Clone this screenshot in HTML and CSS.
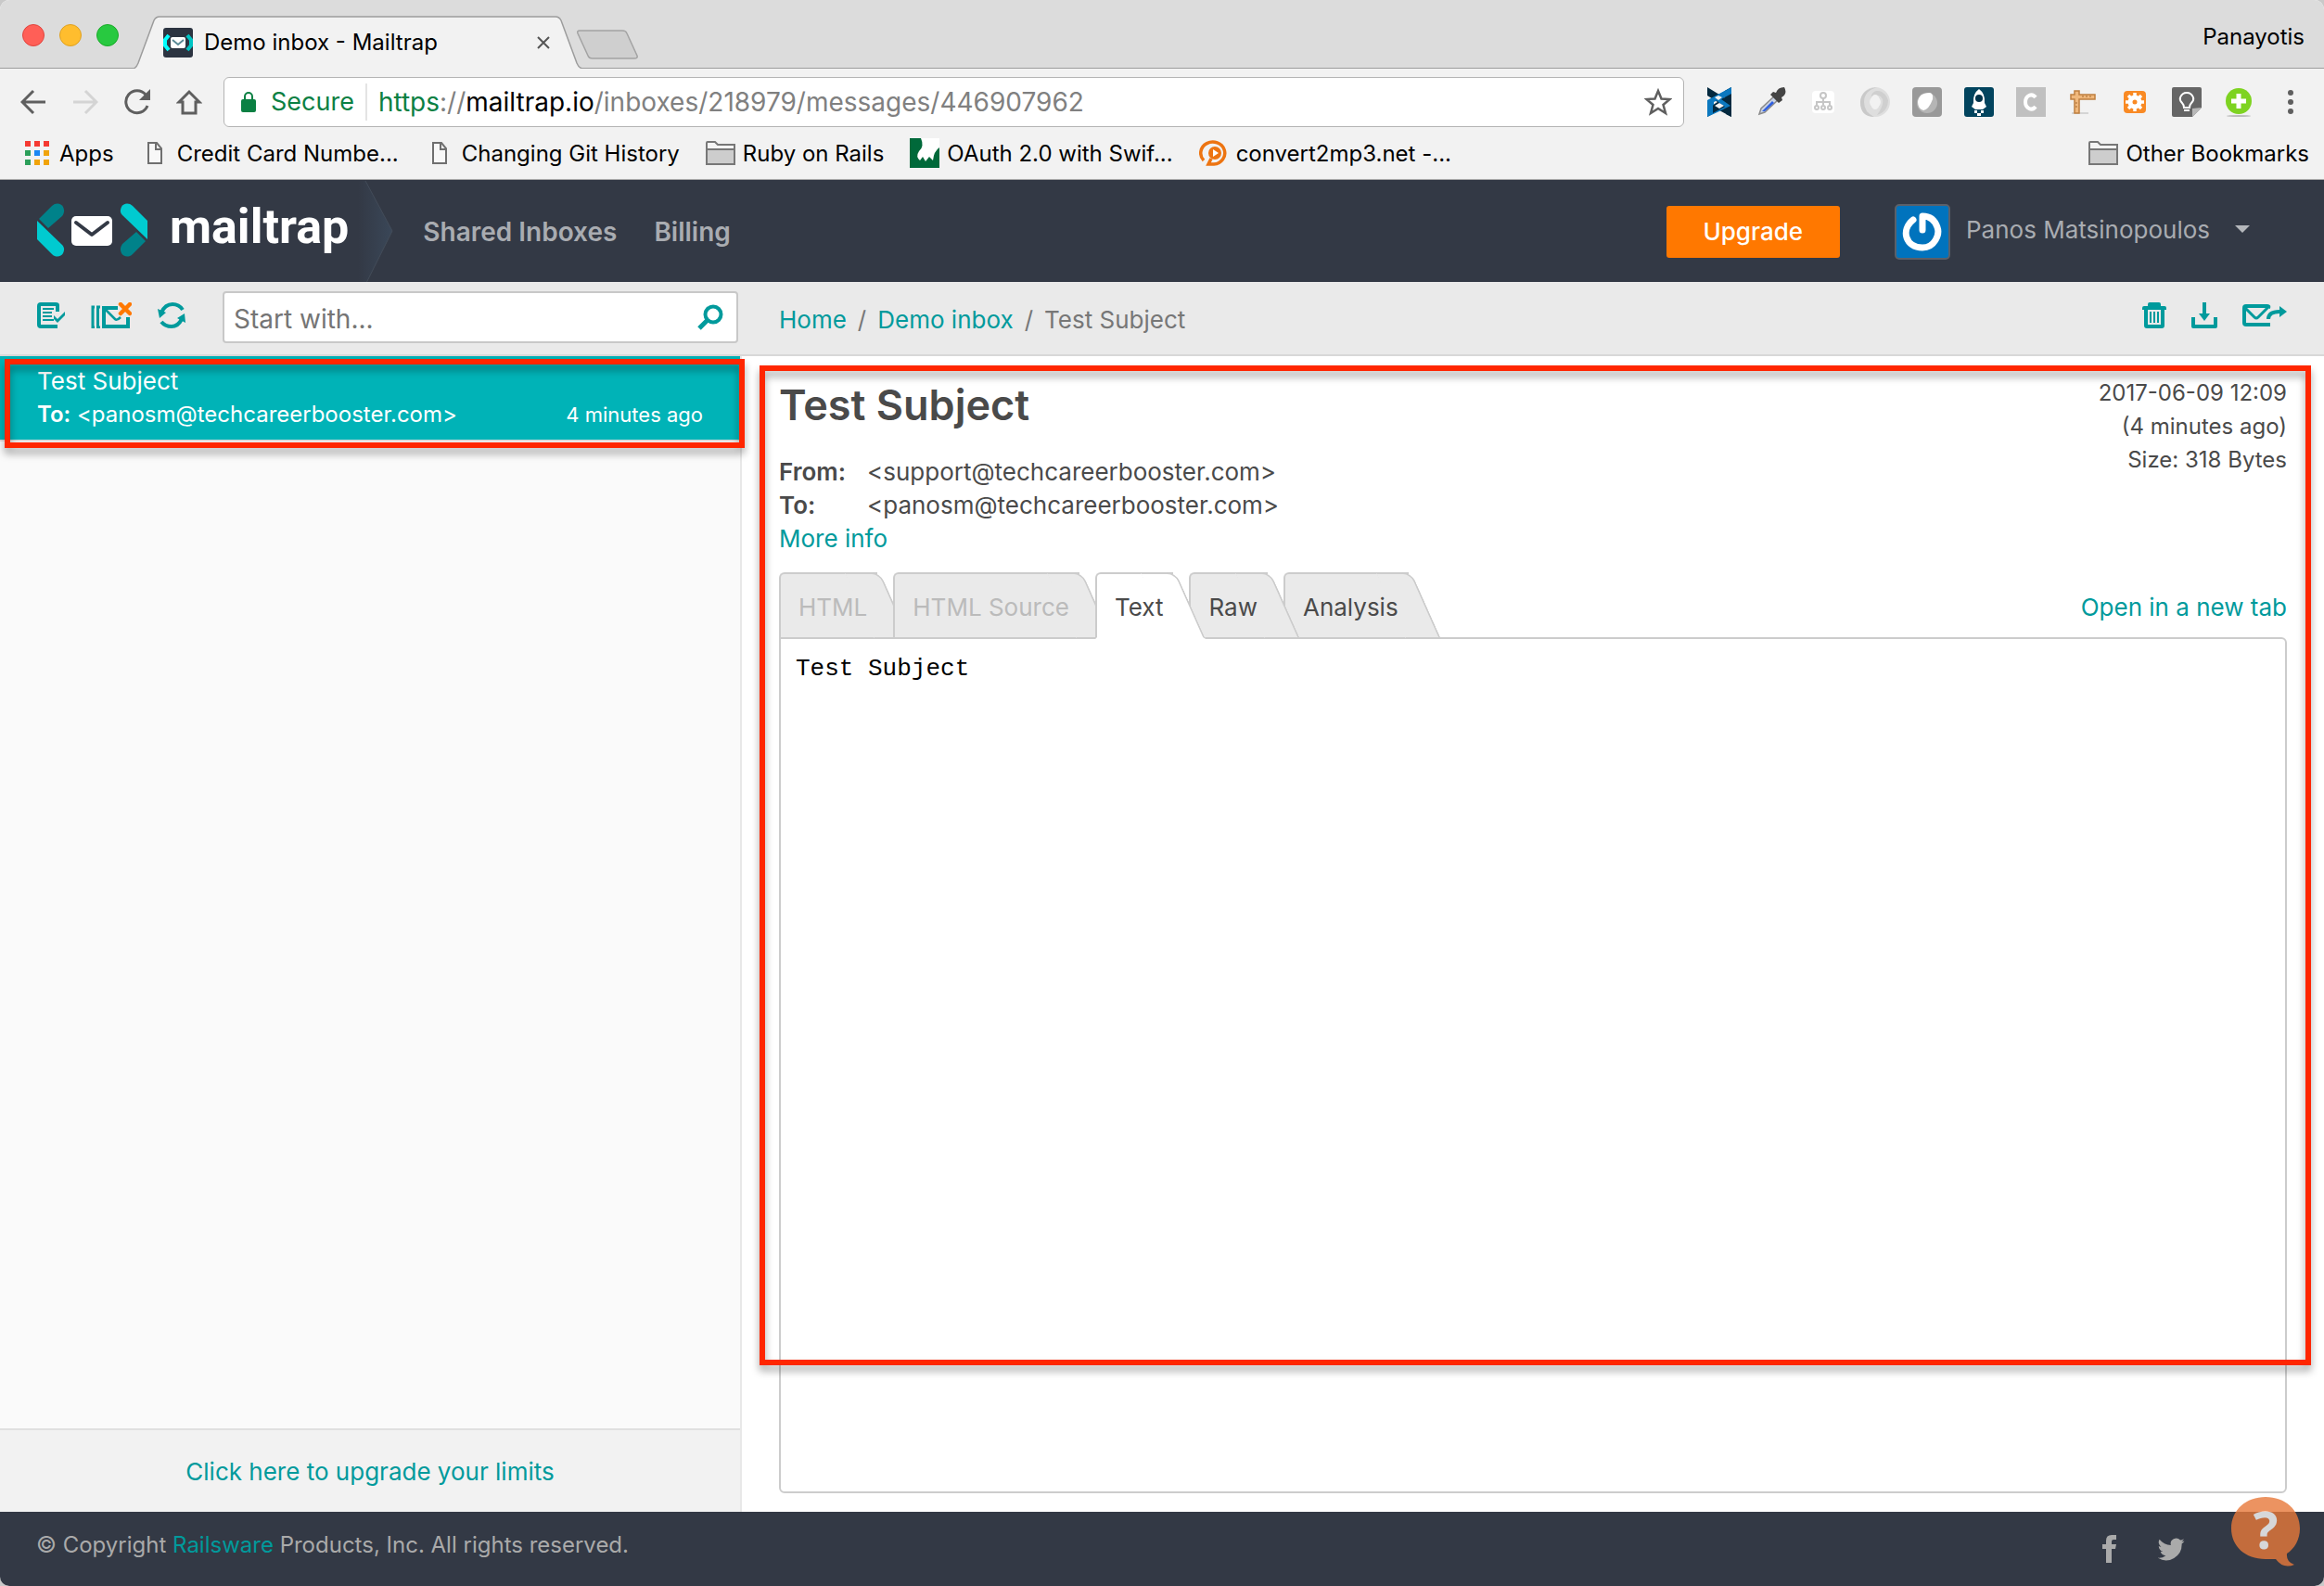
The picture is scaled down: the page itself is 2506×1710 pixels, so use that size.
FILE: index.html
```html
<!DOCTYPE html>
<html lang="en">
<head>
<meta charset="utf-8">
<title>Demo inbox - Mailtrap</title>
<link rel="stylesheet" href="styles.css">
</head>
<body>
<div class="window">
  <div class="tabstrip">
    <div class="lights"><i class="light red"></i><i class="light yellow"></i><i class="light green"></i></div>
    <div class="browser-tab">
      <svg class="tab-shape" viewBox="0 0 484 57" preserveAspectRatio="none" aria-hidden="true"><path d="M0 57 Q3 56 5 51 L22 5 Q24 1 28 1 H455 Q459 1 461 5 L478 51 Q480 56 484 57" fill="#f2f2f2" stroke="#9c9c9c" stroke-width="1.5"/></svg>
      <svg class="favicon" width="32" height="32" viewBox="0 0 32 32" aria-hidden="true"><rect width="32" height="32" rx="3" fill="#2c3441"/><path d="M6 8 L2 13 V19 L6 24" fill="none" stroke="#0ff" stroke-width="4"/><path d="M26 8 L30 13 V19 L26 24" fill="none" stroke="#00c4c4" stroke-width="4"/><rect x="8" y="10" width="16" height="12" rx="2" fill="#fff"/><path d="M10 13 L16 18 L22 13" fill="none" stroke="#5a8a96" stroke-width="2"/></svg>
      <span class="tab-title">Demo inbox - Mailtrap</span>
      <button class="plain tab-close" aria-label="Close tab"><svg width="14" height="14" viewBox="0 0 14 14"><path d="M1 1 L13 13 M13 1 L1 13" stroke="#555" stroke-width="2"/></svg></button>
    </div>
    <button class="plain new-tab" aria-label="New tab"><svg width="66" height="33" viewBox="0 0 66 33"><path d="M3 1 H49 Q53 1 54 4 L65 28 Q66 31 62 31 H17 Q13 31 12 28 L1 4 Q0 1 3 1Z" fill="#cfcfcf" stroke="#a3a3a3" stroke-width="1.5"/></svg></button>
    <span class="profile">Panayotis</span>
  </div>

  <div class="navbar">
    <div class="nav-buttons">
      <button class="plain" aria-label="Back"><svg width="28" height="28" viewBox="0 0 28 28"><path d="M27 14 H3 M14 2 L2 14 L14 26" fill="none" stroke="#5f5f5f" stroke-width="3"/></svg></button>
      <button class="plain" aria-label="Forward"><svg width="28" height="28" viewBox="0 0 28 28"><path d="M1 14 H25 M14 2 L26 14 L14 26" fill="none" stroke="#d4d4d4" stroke-width="3"/></svg></button>
      <button class="plain" aria-label="Reload"><svg width="28" height="28" viewBox="0 0 28 28"><path d="M25 18 A12 12 0 1 1 23 6" fill="none" stroke="#5f5f5f" stroke-width="3"/><path d="M28 0 V12 H16Z" fill="#5f5f5f"/></svg></button>
      <button class="plain" aria-label="Home"><svg width="28" height="28" viewBox="0 0 28 28"><path d="M14 3 L3 14 H7 V26 H21 V14 H25Z" fill="none" stroke="#5f5f5f" stroke-width="3"/></svg></button>
    </div>
    <div class="omnibox">
      <svg width="16" height="22" viewBox="0 0 16 22" aria-hidden="true"><rect y="8" width="16" height="14" rx="2" fill="#0b8043"/><path d="M4 9 V5 A4 4 0 0 1 12 5 V9" fill="none" stroke="#0b8043" stroke-width="2"/></svg>
      <span class="secure">Secure</span>
      <span class="url" role="textbox" aria-label="Address"><span class="scheme">https</span>://<span class="host">mailtrap.io</span>/inboxes/218979/messages/446907962</span>
      <button class="plain" aria-label="Bookmark this page"><svg width="30" height="30" viewBox="0 0 30 30"><path d="M15 3 L18.5 11.500 L27.500 12 L20.500 18 L23 27 L15 22 L7 27 L9.500 18 L2.500 12 L11.500 11.500Z" fill="none" stroke="#5f5f5f" stroke-width="2.500"/></svg></button>
    </div>
    <div class="extensions">
      <svg viewBox="0 0 32 32"><path d="M3 0 L29 16 V32 L16 25 L3 32 V23 L14 16 L3 9Z" fill="#04293f"/><path d="M29 0 L3 14 V23 L10 19 V16 L29 7Z" fill="#0b78bf"/><path d="M29 0 V32 L23 29 V19 L16 15 L22 11 V4Z" fill="#04293f"/><path d="M3 32 V14 L9 17 V28 L22 21 L16 17 L10 11 L29 0 V7 L18 13 L28 20 L16 26Z" fill="#0b78bf"/><path d="M11 11 L15 9 L19 11 L15 14Z M11 20 L16 17 L21 20 L16 23Z" fill="#f2f2f2"/></svg>
      <svg viewBox="0 0 32 32"><path d="M3 29 L5 23 L20 9 L24 13 L9 27Z" fill="#c9d3e6" stroke="#8b8b8b" stroke-width="1.500"/><path d="M6 26 L17 15 L19 17 L9 26Z" fill="#2f5fe0"/><path d="M15 8 L18 5 L21 6 Q23 0 30 0 Q34 7 27 11 L28 14 L24 17Z" fill="#444"/></svg>
      <svg viewBox="0 0 32 32"><rect x="4" y="4" width="24" height="24" rx="4" fill="#fff"/><g fill="none" stroke="#c6c6c6" stroke-width="2"><circle cx="16" cy="9" r="3"/><path d="M16 12 V19 M9 20 V16 H23 V20"/><circle cx="9" cy="22" r="2"/><circle cx="16" cy="22" r="2"/><circle cx="23" cy="22" r="2"/></g></svg>
      <svg viewBox="0 0 32 32"><circle cx="16" cy="16" r="11" fill="none" stroke="#dedede" stroke-width="10"/><path d="M18 0 Q4 4 4 16 Q4 27 15 32 Q0 32 0 16 Q1 2 18 0Z" fill="#c9c9c9"/><path d="M12 12 Q16 6 22 10 Q28 16 18 30 Q30 26 30 14 Q26 3 17 4 Q11 6 12 12Z" fill="#cfcfcf"/><ellipse cx="16" cy="16" rx="5" ry="8" fill="#f2f2f2"/></svg>
      <svg viewBox="0 0 32 32"><rect width="32" height="32" rx="4" fill="#999"/><circle cx="16" cy="17" r="11" fill="#b5b5b5"/><path d="M6 16 Q7 6 19 6 Q23 7 22 13 Q18 24 12 25 Q6 23 6 16Z" fill="#fff"/></svg>
      <svg viewBox="0 0 32 32"><rect width="32" height="32" rx="3" fill="#02445e"/><path d="M16 2 Q23 7 22 17 L24 21 L20 24 H12 L8 21 L10 17 Q9 7 16 2Z" fill="#fff"/><circle cx="16" cy="12" r="4" fill="#02334a"/><path d="M11 25 H14 V28 H11Z M18 25 H21 V28 H18Z M14 28 H18 V31 H14Z" fill="#fff"/></svg>
      <svg viewBox="0 0 32 32"><rect width="32" height="32" fill="#c0c0c0"/><path d="M21 11 Q18 7 14 9 Q10 11 10 16 Q10 21 14 23 Q18 25 21 21" fill="none" stroke="#fff" stroke-width="4"/></svg>
      <svg viewBox="0 0 32 32"><path d="M4 28 H22" stroke="#d5d5d5" stroke-width="2"/><path d="M7 4 H12 V8 H29 V13 H12 V28 H7 V13 H3 V8 H7Z" fill="#f0b87c" stroke="#bf7f3f" stroke-width="1.500"/><path d="M16 9 V11 M20 9 V11 M24 9 V11 M8 17 H10 M8 21 H10" stroke="#a66a30"/></svg>
      <svg viewBox="0 0 32 32"><rect x="4" y="4" width="24" height="24" rx="4" fill="#f98a24"/><circle cx="16" cy="16" r="5" fill="none" stroke="#fff" stroke-width="5"/><path d="M16 6 V10 M6 16 H10 M9 9 L12 12 M23 9 L20 12 M16 26 V22 M26 16 H22 M23 23 L20 20 M9 23 L12 20" stroke="#fff" stroke-width="3.500"/></svg>
      <svg viewBox="0 0 32 32"><path d="M2 0 H30 Q32 0 32 2 V22 L22 32 H2 Q0 32 0 30 V2 Q0 0 2 0Z" fill="#666"/><path d="M22 32 V23 L32 22Z" fill="#b8b8b8"/><path d="M13 22 Q13 19 11 17 Q8 14 9 11 Q11 6 16 6 Q21 6 23 11 Q24 14 21 17 Q19 19 19 22Z M13 25 H19" fill="none" stroke="#fff" stroke-width="2"/></svg>
      <svg viewBox="0 0 32 32"><ellipse cx="16" cy="31" rx="13" ry="1" fill="#bbb"/><circle cx="16" cy="15" r="14" fill="#7ed321"/><path d="M16 7 V23 M8 15 H24" stroke="#fff" stroke-width="5"/></svg>
      <button class="plain" aria-label="Menu"><svg viewBox="0 0 32 32"><circle cx="16" cy="6" r="3" fill="#5f5f5f"/><circle cx="16" cy="16" r="3" fill="#5f5f5f"/><circle cx="16" cy="26" r="3" fill="#5f5f5f"/></svg></button>
    </div>
  </div>

  <nav class="bookmarks" aria-label="Bookmarks">
    <a href="#"><svg viewBox="0 0 32 32"><path d="M3 3h6v6H3z M13 3h6v6h-6z M23 3h6v6h-6z" fill="#f53a32"/><path d="M3 13h6v6H3z M3 23h6v6H3z" fill="#2c9f5a"/><path d="M13 13h6v6h-6z" fill="#1b87f3"/><path d="M23 13h6v6h-6z M13 23h6v6h-6z M23 23h6v6h-6z" fill="#f0a30a"/></svg>Apps</a>
    <a href="#"><svg viewBox="0 0 32 32"><path d="M9 5 H18 L23 11 V27 H9Z M17 5 V12 H23" fill="#f8f8f8" stroke="#6f6f6f" stroke-width="2"/></svg>Credit Card Numbe...</a>
    <a href="#"><svg viewBox="0 0 32 32"><path d="M9 5 H18 L23 11 V27 H9Z M17 5 V12 H23" fill="#f8f8f8" stroke="#6f6f6f" stroke-width="2"/></svg>Changing Git History</a>
    <a href="#"><svg viewBox="0 0 32 32"><path d="M1 27 V5 Q1 4 2 4 H10 L13 7 H31 V27 Q31 28 30 28 H2 Q1 28 1 27Z" fill="#f4f4f4" stroke="#777" stroke-width="2"/><path d="M1 12 H31 V28 H1Z" fill="#cdcdcd" stroke="#777" stroke-width="2"/></svg>Ruby on Rails</a>
    <a href="#"><svg viewBox="0 0 32 32"><rect width="32" height="32" fill="#00693a"/><path d="M12 0 H32 V10 Q26 14 25 24 L21 20 L17 25 L14 20 L11 24 Q6 20 10 14 Q16 9 12 0Z" fill="#fff"/></svg>OAuth 2.0 with Swif...</a>
    <a href="#"><svg viewBox="0 0 32 32"><path d="M5 24 A13 12 0 1 1 16 28 H10 L13 22" fill="none" stroke="#ed7411" stroke-width="3.500"/><circle cx="17" cy="16" r="7" fill="#ed7411"/><path d="M15 12 L21 16 L15 20Z" fill="#fff"/></svg>convert2mp3.net -...</a>
    <a href="#" class="other"><svg viewBox="0 0 32 32"><path d="M1 27 V5 Q1 4 2 4 H10 L13 7 H31 V27 Q31 28 30 28 H2 Q1 28 1 27Z" fill="#f4f4f4" stroke="#777" stroke-width="2"/><path d="M1 12 H31 V28 H1Z" fill="#cdcdcd" stroke="#777" stroke-width="2"/></svg>Other Bookmarks</a>
  </nav>

  <header class="app-header">
    <a href="#" class="brand">
      <svg width="119" height="58" viewBox="0 0 119 58" aria-hidden="true">
        <defs><g id="chevron"><path d="M2 17 L16 3 C20 -1 26 0 28 4 C30 8 29 11 27 14 L12 27Z" fill="#00828a"/><path d="M0 19 V39 L16 55 C20 59 26 58 28 54 C30 50 29 47 27 45Z" fill="#00cbd0"/></g></defs>
        <use href="#chevron"/><use href="#chevron" transform="rotate(180 59.500 29)"/>
        <rect x="37" y="14" width="44" height="32" rx="5" fill="#fff"/><path d="M42 21 L59 34 L76 21" fill="none" stroke="#333945" stroke-width="4" stroke-linecap="round" stroke-linejoin="round"/>
      </svg>
      <span class="wordmark">mailtrap</span>
    </a>
    <svg class="divider" width="40" height="110" viewBox="0 0 40 110" aria-hidden="true"><defs><linearGradient id="fade"><stop offset="0" stop-color="#3a4758" stop-opacity="0"/><stop offset="1" stop-color="#3a4758"/></linearGradient></defs><path d="M0 0 H8 L37 54 L9 110 H0Z" fill="url(#fade)"/><path d="M8 0 L37 54 L9 110" fill="none" stroke="#434c59"/></svg>
    <nav class="main-nav"><a href="#">Shared Inboxes</a><a href="#">Billing</a></nav>
    <a href="#" class="upgrade">Upgrade</a>
    <button class="plain account">
      <svg class="avatar" width="60" height="60" viewBox="0 0 60 60" aria-hidden="true"><rect x="1" y="1" width="58" height="58" rx="4" fill="#0073bd" stroke="#5b6069" stroke-width="2"/><path d="M20 17 C6 28 12 47 30 47 C43 47 49 33 46 25 C43 16 37 13 30 13 V28" fill="none" stroke="#fff" stroke-width="7" stroke-linecap="round" stroke-linejoin="round"/></svg>
      <span>Panos Matsinopoulos</span>
      <svg class="caret" width="16" height="8" viewBox="0 0 16 8" aria-hidden="true"><path d="M0 0 H16 L8 8Z" fill="#b4b7bb"/></svg>
    </button>
  </header>

  <div class="workspace">
    <div class="bar list-bar">
      <div class="list-actions">
        <button class="plain" aria-label="Mark all as read"><svg width="30" height="28" viewBox="0 0 30 28"><path d="M22 10 V3 Q22 2 20 2 H4 Q2 2 2 4 V24 Q2 26 4 26 H22" fill="none" stroke="#009a9c" stroke-width="4"/><path d="M6 7 H18 M6 11 H16 M6 15 H16 M6 19 H18" stroke="#009a9c" stroke-width="2"/><path d="M18 14 L22 18 L30 10 V14 L22 22 L18 18Z" fill="#009a9c"/></svg></button>
        <button class="plain" aria-label="Clean inbox"><svg width="44" height="28" viewBox="0 0 44 28"><path d="M4 5 H2 V27 H4 M10 5 H7.500 V27 H10" fill="none" stroke="#009a9c" stroke-width="3"/><path d="M29 6 H14 V26 H40 V16" fill="none" stroke="#009a9c" stroke-width="4"/><path d="M16 8 L26 18 Q28 20 32 16" fill="none" stroke="#009a9c" stroke-width="2.500"/><path d="M32 2 L42 12 M42 2 L32 12" stroke="#ff7800" stroke-width="4.500" stroke-linecap="round"/></svg></button>
        <button class="plain" aria-label="Refresh"><svg width="30" height="28" viewBox="0 0 30 28"><path d="M4 11 Q8 2 16 2 Q23 2 27 8 M26 18 Q22 26 15 26 Q8 26 4 21" fill="none" stroke="#009a9c" stroke-width="4"/><path d="M0 7 L9 11 L2 17Z M21 17 L29 12 L30 22Z" fill="#009a9c"/></svg></button>
      </div>
      <form class="search">
        <input type="search" placeholder="Start with..." aria-label="Search messages">
        <button type="button" class="plain" aria-label="Search"><svg width="28" height="28" viewBox="0 0 28 28"><circle cx="17" cy="11" r="8.500" fill="none" stroke="#009a9c" stroke-width="4"/><path d="M11 17 L2 26" stroke="#009a9c" stroke-width="5"/></svg></button>
      </form>
    </div>
    <div class="bar message-bar">
      <nav class="breadcrumb" aria-label="Breadcrumb"><a href="#">Home</a><span>/</span><a href="#">Demo inbox</a><span>/</span><span>Test Subject</span></nav>
      <div class="message-actions">
        <button class="plain" aria-label="Delete"><svg width="26" height="28" viewBox="0 0 26 28"><path d="M6 2 Q6 0 8 0 H18 Q20 0 20 2 V4 H24 Q26 4 26 6 V8 H24 V25 Q24 28 21 28 H5 Q2 28 2 25 V8 H0 V6 Q0 4 2 4 H6Z" fill="#009a9c"/><path d="M6 8 H20 V24 H6Z" fill="#eaeaea"/><path d="M9 10 V22 M13 10 V22 M17 10 V22" stroke="#009a9c" stroke-width="2"/></svg></button>
        <button class="plain" aria-label="Download"><svg width="28" height="28" viewBox="0 0 28 28"><path d="M2 16 V26 H26 V16" fill="none" stroke="#009a9c" stroke-width="4" stroke-linejoin="round"/><path d="M12 0 H16 V12 H20 L14 20 L8 12 H12Z" fill="#009a9c"/></svg></button>
        <button class="plain" aria-label="Forward message"><svg width="48" height="28" viewBox="0 0 48 28"><path d="M30 24 H4 Q2 24 2 22 V6 Q2 4 4 4 H27 Q29 4 28 6" fill="none" stroke="#009a9c" stroke-width="4"/><path d="M3 6 L13 16 Q15 18 17 16 L28 5" fill="none" stroke="#009a9c" stroke-width="3"/><path d="M28 18 Q28 10 40 10" fill="none" stroke="#009a9c" stroke-width="4"/><path d="M40 4 L48 10 L40 16Z" fill="#009a9c"/></svg></button>
      </div>
    </div>

    <aside class="message-list">
      <a href="#" class="message-item">
        <span class="subject">Test Subject</span>
        <span class="recipient"><span><b>To:</b> &lt;panosm@techcareerbooster.com&gt;</span><time>4 minutes ago</time></span>
        <i class="callout callout-item"></i>
      </a>
      <div class="limits"><a href="#">Click here to upgrade your limits</a></div>
    </aside>

    <main class="message">
      <div class="message-head">
        <div>
          <h1>Test Subject</h1>
          <dl class="addresses">
            <dt>From:</dt><dd>&lt;support@techcareerbooster.com&gt;</dd>
            <dt>To:</dt><dd>&lt;panosm@techcareerbooster.com&gt;</dd>
          </dl>
          <a href="#" class="more">More info</a>
        </div>
        <div class="meta">2017-06-09 12:09<br>(4 minutes ago)<br>Size: 318 Bytes</div>
      </div>
      <div class="tabs-row">
        <div class="tabs" role="tablist">
          <button class="tab" role="tab" disabled>HTML</button>
          <button class="tab" role="tab" disabled>HTML Source</button>
          <button class="tab active" role="tab" aria-selected="true">Text</button>
          <button class="tab raw" role="tab">Raw</button>
          <button class="tab" role="tab">Analysis</button>
        </div>
        <a href="#">Open in a new tab</a>
      </div>
      <pre class="content">Test Subject</pre>
      <i class="callout callout-message"></i>
    </main>
  </div>

  <footer class="app-footer">
    <p>© Copyright <a href="#">Railsware</a> Products, Inc. All rights reserved.</p>
    <div class="social">
      <a href="#" aria-label="Facebook"><svg width="15" height="30" viewBox="0 0 15 30"><path d="M4 30 V15 H0 V10 H4 V6 Q4 0 10 0 H15 V5 H12 Q10 5 10 7 V10 H15 L14 15 H10 V30Z" fill="#aaa"/></svg></a>
      <a href="#" aria-label="Twitter"><svg width="29" height="26" viewBox="0 2 24 20"><path d="M23.600 4.900c-.9.400-1.800.700-2.800.800 1-.6 1.800-1.600 2.200-2.700-1 .6-2 1-3.100 1.200a4.900 4.900 0 0 0-8.400 4.500C7.400 8.500 3.800 6.500 1.300 3.500a4.900 4.900 0 0 0 1.500 6.600c-.8 0-1.600-.2-2.200-.6 0 2.400 1.700 4.400 3.900 4.900-.7.200-1.500.2-2.200.1.600 2 2.400 3.400 4.600 3.400A9.900 9.900 0 0 1-.300 19.900 14 14 0 0 0 21.200 7.400c.9-.7 1.700-1.500 2.400-2.500z" fill="#aaa"/></svg></a>
    </div>
    <button class="plain help" aria-label="Help"><svg width="74" height="75" viewBox="0 0 74 75" aria-hidden="true"><path d="M37 0 C58 0 74 14 74 34 C74 46 68 56 60 61 Q59 70 68 73 Q56 78 48 67 H37 C15 67 0 53 0 34 C0 14 16 0 37 0Z" fill="#e8793a"/></svg><span>?</span></button>
  </footer>
</div>
</body>
</html>
```
FILE: styles.css
```css
* { box-sizing: border-box; }

body {
  margin: 0;
  background: #c9c9c9;
  color: #4a4a4a;
  font: 26px/36px Inter, "Liberation Sans", sans-serif;
}

a { color: #009a9c; text-decoration: none; }
svg { display: block; flex: none; }

.plain {
  padding: 0;
  border: 0;
  background: none;
  color: inherit;
  font: inherit;
}

.window {
  display: flex;
  flex-direction: column;
  min-height: 100vh;
  overflow: hidden;
  border-radius: 10px;
  background: #fff;
}

/* Browser tab strip */
.tabstrip {
  display: flex;
  height: 74px;
  padding: 0 21px 0 24px;
  border-bottom: 1px solid #9c9c9c;
  background: #dcdcdc;
  color: #000;
  font-size: 24px;
}

.lights { display: flex; gap: 16px; width: 120px; padding-top: 26px; }
.light { width: 24px; height: 24px; border: 1px solid; border-radius: 50%; }
.red { border-color: #e0443e; background: #ff5f57; }
.yellow { border-color: #dea123; background: #ffbd2e; }
.green { border-color: #1aab29; background: #28c940; }

.browser-tab {
  position: relative;
  display: flex;
  align-items: center;
  width: 484px;
  height: 57px;
  margin-top: 17px;
  padding: 0 35px 0 32px;
}

.tab-shape { position: absolute; inset: 0; width: 100%; height: 100%; }
.favicon, .tab-title, .tab-close { position: relative; }
.tab-title { margin-left: 12px; }
.tab-close { margin-left: auto; }
.new-tab { align-self: flex-start; margin: 32px 0 0 -6px; }
.profile { margin: 22px 0 0 auto; }

/* Browser toolbar */
.navbar {
  display: flex;
  align-items: center;
  gap: 22px;
  padding: 9px 20px 0 22px;
  background: #f2f2f2;
}

.nav-buttons { display: flex; gap: 28px; width: 197px; }

.omnibox {
  display: flex;
  flex: 1;
  align-items: center;
  height: 54px;
  padding: 0 12px 0 18px;
  border: 1px solid #b4b4b4;
  border-radius: 6px;
  background: #fff;
  font-size: 28px;
}

.secure {
  margin-left: 16px;
  padding-right: 12px;
  border-right: 2px solid #e4e4e4;
  color: #0b8043;
  font-size: 27px;
  line-height: 40px;
}

.url { flex: 1; margin-left: 12px; color: #808080; }
.scheme { color: #0b8043; }
.host { color: #000; }

.extensions { display: flex; gap: 24px; }
.extensions svg { width: 32px; height: 32px; }

.bookmarks {
  display: flex;
  gap: 28px;
  height: 57px;
  padding: 12px 16px 0 24px;
  border-bottom: 1px solid #aaa;
  background: #f2f2f2;
  font-size: 24px;
  line-height: 34px;
}

.bookmarks a { display: flex; gap: 8px; color: #000; white-space: nowrap; }
.bookmarks svg { width: 32px; height: 32px; }
.bookmarks .other { margin-left: auto; }

/* Application header */
.app-header {
  display: flex;
  align-items: center;
  height: 110px;
  padding: 2px 80px 0 40px;
  background: #333945;
  color: #a9acb1;
}

.brand { display: flex; align-items: center; gap: 24px; margin-bottom: 4px; color: #fff; }
.wordmark { padding-bottom: 6px; font: 700 52px/56px Roboto, sans-serif; }
.divider { margin-left: 10px; }
.main-nav { display: flex; flex: 1; gap: 40px; margin-left: 30px; font-size: 28px; font-weight: 600; }
.main-nav a { color: inherit; }

.upgrade {
  padding: 10px 40px;
  border-radius: 3px;
  background: #ff7800;
  color: #fff;
  font-weight: 500;
}

.account { display: flex; align-items: center; gap: 17px; margin-left: 59px; }
.account span { margin-right: 10px; padding-bottom: 5px; }
.caret { margin-bottom: 6px; }

/* Message list and message */
.workspace {
  display: grid;
  flex: 1;
  grid-template-columns: 800px minmax(0, 1fr);
  grid-template-rows: auto 1fr;
}

.bar {
  display: flex;
  height: 80px;
  border-bottom: 2px solid #d8d8d8;
  background: #eaeaea;
}

.list-bar { justify-content: space-between; padding: 10px 4px 0 40px; }
.list-actions { display: flex; align-items: flex-start; gap: 28px; padding-top: 12px; }
.search { position: relative; width: 556px; height: 56px; }

.search input {
  width: 100%;
  height: 100%;
  padding: 3px 60px 0 10px;
  border: 2px solid #c8c8c8;
  border-radius: 4px;
  background: #fff;
  font: 28px Inter, "Liberation Sans", sans-serif;
}

.search input::placeholder { color: #757575; }
.search button { position: absolute; top: 14px; right: 16px; }

.message-bar { justify-content: space-between; padding: 22px 40px 0; }
.breadcrumb { display: flex; gap: 12px; padding-top: 1px; color: #777; }
.message-actions { display: flex; align-items: flex-start; gap: 27px; }

.message-list {
  display: flex;
  flex-direction: column;
  justify-content: space-between;
  border-right: 2px solid #e8e8e8;
  background: #fafafa;
}

.message-item {
  position: relative;
  display: block;
  height: 92px;
  padding: 9px 40px 0 40px;
  border-bottom: 2px solid #ddd;
  background: #00b3b7;
  color: #fff;
}

.subject { display: block; }
.recipient { display: flex; justify-content: space-between; font-size: 24px; }
.recipient b { font-weight: 600; }
.recipient time { font-size: 22px; }

.limits {
  padding: 27px 0 25px;
  border-top: 2px solid #e0e0e0;
  background: #f2f2f2;
  text-align: center;
}

.message {
  position: relative;
  display: flex;
  flex-direction: column;
  padding: 22px 40px 20px;
}

.message-head { display: flex; justify-content: space-between; }
h1 { margin: 3px 0 26px; font-size: 45px; font-weight: 600; line-height: 56px; }
.addresses { display: grid; grid-template-columns: 95px 1fr; margin: 0; }
.addresses dt { font-weight: 600; }
.addresses dd { margin: 0; }
.meta { font-size: 24px; text-align: right; }

.tabs-row { display: flex; align-items: center; justify-content: space-between; margin-top: 18px; }
.tabs-row > a { padding-top: 4px; }
.tabs { display: flex; }

.tab {
  position: relative;
  isolation: isolate;
  z-index: 1;
  height: 72px;
  padding: 4px 28px 0 21px;
  border: 0;
  background: none;
  color: #4a4a4a;
  font: inherit;
}

/* Left body of the tab, then its slanted right edge */
.tab::before,
.tab::after {
  content: "";
  position: absolute;
  z-index: -1;
  top: 0;
  bottom: 0;
  border: 2px solid #ccc;
  background: #eaeaea;
}

.tab::before { right: 17px; left: 0; border-right: 0; border-top-left-radius: 6px; }
.tab::after { right: -18px; width: 36px; border-left: 0; border-top-right-radius: 10px; transform: skewX(24deg); transform-origin: bottom right; }
.tab:disabled { color: #bbb; }
.tab:nth-child(2) { z-index: 2; }
.tab.raw { z-index: 3; }
.tab.active { z-index: 4; }
.tab.active::before, .tab.active::after { border-bottom-color: #fff; background: #fff; }

.content {
  flex: 1;
  margin: -2px 0 0;
  padding: 14px 16px;
  border: 2px solid #ccc;
  border-radius: 0 6px 6px 6px;
  color: #000;
  font: 26px/36px "Liberation Mono", monospace;
}

.callout {
  position: absolute;
  z-index: 5;
  border: 6px solid #ff2600;
  filter: drop-shadow(0 6px 4px rgba(0, 0, 0, 0.35));
  pointer-events: none;
}

.callout-item { inset: 3px -5px -9px 5px; }
.callout-message { inset: 10px 14px 158px 19px; }

/* Footer */
.app-footer {
  position: relative;
  display: flex;
  align-items: center;
  justify-content: space-between;
  height: 80px;
  padding: 0 150px 0 39px;
  background: #333945;
  color: #aaa;
  font-size: 24px;
}

.app-footer p { margin: 0 0 8px; }
.social { display: flex; align-items: center; gap: 45px; }
.help { position: absolute; right: 26px; bottom: 21px; opacity: 0.8; }
.help span { position: absolute; inset: 0 0 8px; color: #fff; font: 700 56px/68px "Open Sans", sans-serif; text-align: center; }
```
